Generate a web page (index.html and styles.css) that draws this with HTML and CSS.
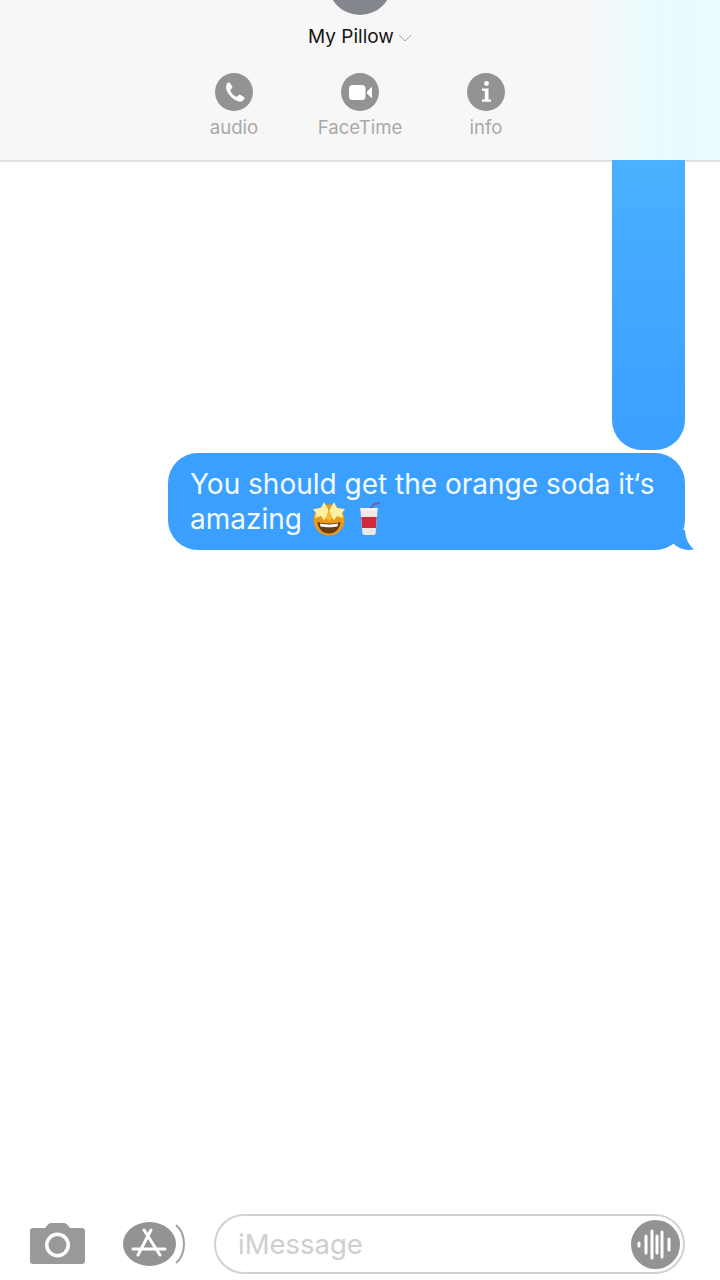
FILE: index.html
```html
<!DOCTYPE html>
<html lang="en">
<head>
<meta charset="utf-8">
<title>My Pillow</title>
<link rel="stylesheet" href="styles.css">
</head>
<body>
<div class="page">
  <header class="header">
    <div class="avatar"></div>
    <div class="name-row">
      <span class="name">My Pillow</span>
      <svg class="chevron" width="14" height="8" viewBox="0 0 14 8"><path d="M1 1l6 6 6-6" fill="none" stroke="#a4a4a6" stroke-width="1"/></svg>
    </div>
    <div class="actions">
      <div class="action">
        <svg class="action-icon" viewBox="0 0 38 38"><circle cx="19" cy="19" r="19" fill="#939393"/><path d="M12.600 9.800c1-.7 2-.5 2.600.4l1.900 3.100c.5.900.3 1.700-.4 2.300l-1.200 1c-.3.3-.4.600-.2 1 .6 1.400 1.400 2.600 2.400 3.700 1 1 2.300 1.900 3.600 2.500.4.200.7.100 1-.2l1-1.200c.6-.8 1.400-1 2.300-.5l3 1.800c1 .6 1.200 1.600.5 2.600-1.200 1.800-3 2.700-5.100 2.200-3-.7-5.700-2.400-8.100-4.800-2.400-2.400-4.100-5.100-4.800-8.100-.5-2.100.6-4.300 1.500-5.800z" fill="#fff"/></svg>
        <span class="action-label">audio</span>
      </div>
      <div class="action">
        <svg class="action-icon" viewBox="0 0 38 38"><circle cx="19" cy="19" r="19" fill="#939393"/><rect x="8" y="12" width="16.500" height="15" rx="3.500" fill="#fff"/><path d="M26 18.500l4-4c.5-.5 1-.3 1 .4v9.200c0 .7-.5.9-1 .4l-4-4z" fill="#fff"/></svg>
        <span class="action-label">FaceTime</span>
      </div>
      <div class="action">
        <svg class="action-icon" viewBox="0 0 38 38"><circle cx="19" cy="19" r="19" fill="#939393"/><circle cx="19.500" cy="10.500" r="2.400" fill="#fff"/><path d="M15 15.500h6.500v11H24v2.200H15v-2.200h2.800v-8.800H15z" fill="#fff"/></svg>
        <span class="action-label">info</span>
      </div>
    </div>
  </header>

  <main class="thread">
    <div class="bubble-tall"></div>
    <div class="bubble">
      <div class="bubble-text">You should get the orange soda it‘s<br>amazing<svg class="emoji emoji-face" viewBox="0 0 34 36">
          <circle cx="17" cy="20" r="15.500" fill="#e79a1c"/>
          <path d="M1 9l8-1 3-6 4 7 1 5-5 6-3-4-6 2 1-5z" fill="#fdf0a0"/>
          <path d="M33 9l-8-1-3-6-4 7-1 5 5 6 3-4 6 2-1-5z" fill="#fdf0a0"/>
          <path d="M17 10l3.500 8-3.500 3-3.500-3z" fill="#f3b92f"/>
          <path d="M5.500 22c7.500 2 15.500 2 23 0-.6 7-5.500 11.500-11.500 11.500S6.100 29 5.500 22z" fill="#6b3a12"/>
          <path d="M8 23.500c6 1.200 12 1.200 18 0l-.5 3c-5 1-12 1-17 0z" fill="#fff"/>
        </svg><svg class="emoji emoji-cup" viewBox="0 0 24 34">
          <path d="M13 7l4-5 6-1" fill="none" stroke="#7a5fae" stroke-width="2"/>
          <path d="M3 6h18l-.5 3h-17z" fill="#f5eff0"/>
          <path d="M3.500 9h17l-1.800 22c-.1 1.200-1 2-2 2H7.300c-1 0-1.900-.8-2-2z" fill="#efe6e6"/>
          <path d="M4.200 15h15.600l-.9 11H5.100z" fill="#d0283c"/>
        </svg></div>
      <svg class="tail" width="24" height="21" viewBox="0 0 24 21"><path d="M15 0C15.500 9 19 15 24 19.500C18 20.500 11 20 5 15L0 10V0Z" fill="#3a9fff"/></svg>
    </div>
  </main>

  <footer class="composer">
    <svg class="camera" width="55" height="42" viewBox="0 0 55 42"><path fill="#999" d="M3 5H15L18 1.500Q19 0 21 0H34Q36 0 37 1.500L40 5H52Q55 5 55 8V38Q55 41 52 41H3Q0 41 0 38V8Q0 5 3 5Z"/><circle cx="27.500" cy="22" r="12.500" fill="#fff"/><circle cx="27.500" cy="22" r="9" fill="#999"/></svg>
    <svg class="appstore" width="62" height="44" viewBox="0 0 62 44">
      <ellipse cx="26.500" cy="22" rx="26.500" ry="22" fill="#939393"/>
      <path d="M53 3c6 5 8 12 8 19s-2 14-8 19" fill="none" stroke="#a0a0a0" stroke-width="2"/>
      <path d="M21 8l16 25M28 8L15 33M10 27h32" fill="none" stroke="#fff" stroke-width="3" stroke-linecap="round"/>
    </svg>
    <div class="input">
      <span class="placeholder">iMessage</span>
      <svg class="voice" width="49" height="49" viewBox="0 0 49 49">
        <circle cx="24.500" cy="24.500" r="24.500" fill="#939393"/>
        <g stroke="#fff" stroke-width="3" stroke-linecap="round">
          <path d="M8 23v3M15 16v17M21 11v27M26 16v17M31 12v25M38 19v11"/>
        </g>
      </svg>
    </div>
  </footer>
</div>
</body>
</html>
```

FILE: styles.css
```css
* { box-sizing: border-box; }
html, body { margin: 0; padding: 0; background: #fff; }
body { font-family: Inter, "Liberation Sans", sans-serif; }
.page {
  width: 720px;
  height: 1280px;
  display: flex;
  flex-direction: column;
  overflow: hidden;
  background: #fff;
}
.header {
  flex: none;
  height: 162px;
  border-bottom: 2px solid #e2e2e4;
  background: linear-gradient(90deg, #f7f7f7 0%, #f7f7f7 81%, #e8fbff 92%, #ebfaff 100%);
  display: flex;
  flex-direction: column;
  align-items: center;
}
.avatar {
  flex: none;
  width: 64px;
  height: 64px;
  margin-top: -49px;
  border-radius: 50%;
  background: #85878f;
}
.name-row {
  display: flex;
  align-items: center;
  gap: 4px;
  margin-top: 10px;
  height: 24px;
}
.name {
  font-size: 19px;
  color: #151515;
  line-height: 24px;
}
.chevron { margin-top: 1px; }
.actions {
  display: grid;
  grid-template-columns: 126px 126px 126px;
  margin-top: 24px;
}
.action {
  display: flex;
  flex-direction: column;
  align-items: center;
  gap: 5px;
}
.action-icon { width: 38px; height: 38px; display: block; }
.action-label {
  font-size: 18.6px;
  line-height: 22px;
  color: #a9a9a9;
}
.thread {
  flex: 1;
  margin-top: -2px;
  display: flex;
  flex-direction: column;
  align-items: flex-end;
  padding-right: 35px;
  gap: 3px;
}
.bubble-tall {
  flex: none;
  width: 73px;
  height: 290px;
  background: linear-gradient(180deg, #4ab0ff 0%, #3a9fff 100%);
  border-radius: 0 0 30px 30px;
}
.bubble {
  flex: none;
  position: relative;
  width: 517px;
  height: 97px;
  border-radius: 30px;
  background: #3a9fff;
  padding: 14px 0 0 22px;
}
.bubble-text {
  font-size: 28px;
  line-height: 35px;
  color: #f4fbff;
  white-space: nowrap;
}
.emoji { vertical-align: 3px; margin-top: -10px; margin-bottom: -10px; }
.emoji-face { width: 34px; height: 36px; margin-left: 10px; }
.emoji-cup { width: 24px; height: 34px; margin-left: 11px; }
.tail { position: absolute; right: -9px; bottom: -1px; }
.composer {
  flex: none;
  height: 66px;
  padding: 0 35px 6px 30px;
  display: flex;
  align-items: center;
}
.camera { flex: none; }
.appstore { flex: none; margin-left: 38px; }
.input {
  flex: none;
  margin-left: 29px;
  width: 471px;
  height: 60px;
  border: 2px solid #d2d2d2;
  border-radius: 30px;
  display: flex;
  align-items: center;
  justify-content: space-between;
  padding: 0 3px 0 22px;
}
.placeholder { font-size: 27.5px; color: #cfcfcf; }
.voice { flex: none; }
```
